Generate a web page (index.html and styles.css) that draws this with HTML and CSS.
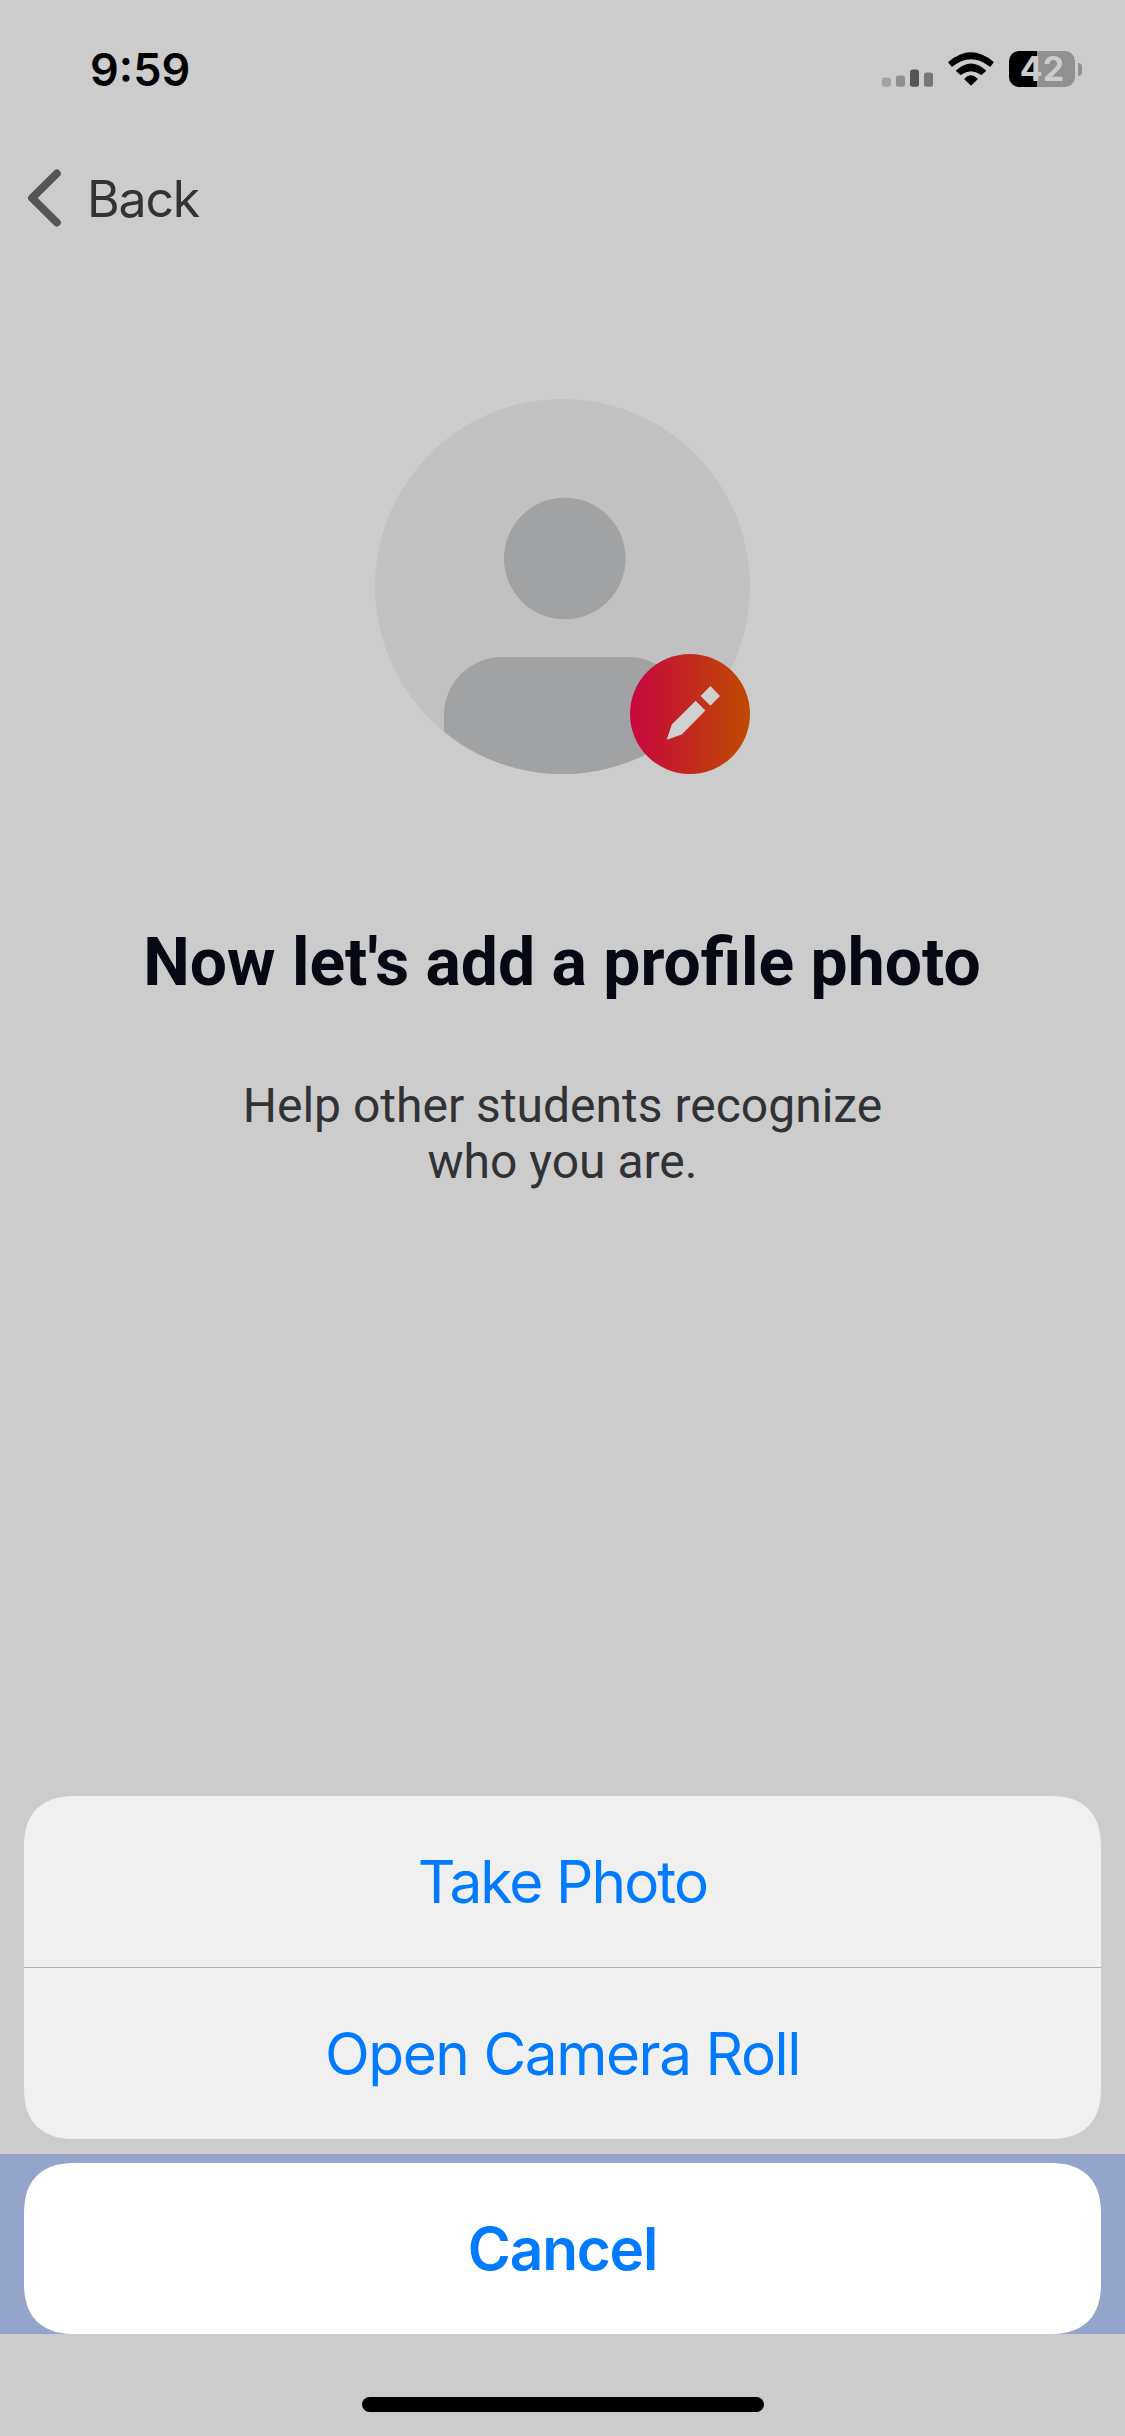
FILE: index.html
```html
<!DOCTYPE html>
<html lang="en">
<head>
<meta charset="utf-8">
<title>Add a profile photo</title>
<link rel="stylesheet" href="styles.css">
</head>
<body>
<div class="screen">
  <header class="status-bar">
    <span class="clock">9:59</span>
    <div class="status-icons">
      <svg class="signal" width="52" height="18" viewBox="0 0 52 18">
        <rect x="0" y="8.5" width="9" height="9.2" rx="2.5" fill="#a4a4a4"/>
        <rect x="14" y="6.5" width="9" height="11.2" rx="2.5" fill="#8f8f8f"/>
        <rect x="28" y="0.5" width="9" height="17.2" rx="2.5" fill="#555"/>
        <rect x="42" y="3.5" width="9" height="14.2" rx="2.5" fill="#777"/>
      </svg>
      <svg class="wifi" width="46" height="34" viewBox="264 65 138 102">
        <g fill="#000" stroke="#000" stroke-width="4" stroke-linejoin="round">
          <path d="M267 96Q333 40 399 96L390 107Q333 62 276 107Z"/>
          <path d="M290 121Q333 82 376 121L364 132Q333 109 302 132Z"/>
          <path d="M315 146Q333 127 351 146L333 163Z"/>
        </g>
      </svg>
      <div class="battery"><div class="battery-body">42</div><div class="battery-cap"></div></div>
    </div>
  </header>

  <nav class="nav-bar">
    <svg width="34" height="58" viewBox="0 0 34 58"><path d="M29.8 4.5L5.1 29L29.8 53.5" fill="none" stroke="#555" stroke-width="8" stroke-linecap="round" stroke-linejoin="round"/></svg>
    <span class="back-label">Back</span>
  </nav>

  <main class="content">
    <div class="avatar">
      <svg width="375" height="375" viewBox="0 0 375 375">
        <defs><clipPath id="disc"><circle cx="187.5" cy="187.5" r="187.5"/></clipPath></defs>
        <circle cx="187.5" cy="187.5" r="187.5" fill="#c1c1c1"/>
        <g clip-path="url(#disc)" fill="#a0a2a3">
          <circle cx="189.8" cy="159.5" r="60.8"/>
          <rect x="69" y="258" width="242" height="160" rx="58"/>
        </g>
      </svg>
      <svg class="edit-badge" width="120" height="120" viewBox="0 0 120 120">
        <defs><linearGradient id="warm"><stop offset="0" stop-color="#c8063f"/><stop offset="1" stop-color="#be4b00"/></linearGradient></defs>
        <circle cx="60" cy="60" r="60" fill="url(#warm)"/>
        <path fill="#d0d0d0" d="M36.8 85.8L41.8 70.6L65.7 46.8L75.4 56.6L51.8 80.6ZM70.6 42L80.4 32L90 42L80.4 51.8Z"/>
      </svg>
    </div>
    <h1 class="title">Now let's add a profile photo</h1>
    <p class="subtitle">Help other students recognize<br>who you are.</p>
  </main>

  <section class="action-sheet">
    <div class="options">
      <div class="option">Take Photo</div>
      <div class="option">Open Camera Roll</div>
    </div>
    <div class="cancel-strip"><div class="cancel">Cancel</div></div>
  </section>
  <footer class="home-area"><div class="home-indicator"></div></footer>
</div>
</body>
</html>
```
FILE: styles.css
```css
* { box-sizing: border-box; }
body { margin: 0; background: #ccc; }
.screen {
  width: 1125px;
  height: 2436px;
  display: flex;
  flex-direction: column;
  background: #ccc;
  font-family: Inter, "Liberation Sans", sans-serif;
  white-space: nowrap;
}
.status-bar {
  height: 138px;
  padding: 0 43px 0 90px;
  display: flex;
  justify-content: space-between;
  align-items: center;
}
.clock { padding-top: 1px; font-size: 45px; font-weight: 600; line-height: 54px; color: #000; }
.status-icons { display: flex; align-items: center; }
.signal { margin: 17px 14px 0 0; }
.wifi { margin-right: 15px; }
.battery { display: flex; align-items: center; gap: 3px; }
.battery-body {
  width: 66px;
  height: 36px;
  border-radius: 10px;
  background: linear-gradient(90deg, #000 28px, #909090 28px);
  color: #ccc;
  font-size: 34px;
  font-weight: 700;
  line-height: 36px;
  text-align: center;
}
.battery-cap { width: 4px; height: 13px; border-radius: 0 6px 6px 0; background: #909090; }

.nav-bar {
  height: 120px;
  padding: 0 27px;
  display: flex;
  align-items: center;
  gap: 26px;
}
.back-label { padding-top: 1px; font-size: 50px; line-height: 60px; letter-spacing: -1.2px; color: #333; }

.content { flex: 1; display: flex; flex-direction: column; align-items: center; padding-top: 141px; }
.avatar { position: relative; width: 375px; height: 375px; }
.avatar svg { display: block; }
.avatar .edit-badge { position: absolute; right: 0; bottom: 0; }
.title {
  margin: 149px 0 0;
  padding-right: 1px;
  font: 700 66px/80px Roboto, sans-serif;
  color: #060814;
}
.subtitle {
  margin: 75px 0 0;
  font: 400 48px/56px Roboto, sans-serif;
  color: #303236;
  text-align: center;
}

.options { margin: 0 24px 15px; border-radius: 42px; background: #f0f0f0; }
.option {
  height: 172px;
  display: flex;
  align-items: center;
  justify-content: center;
  font-size: 58.5px;
  letter-spacing: -1.9px;
  color: #007aff;
}
.option + .option { height: 171px; letter-spacing: -1.45px; }
.option:first-child { border-bottom: 1px solid #b0b0b2; }
.cancel-strip { padding: 9px 24px 0; background: #93a5ca; }
.cancel {
  height: 171px;
  border-radius: 42px;
  background: #fff;
  display: flex;
  align-items: center;
  justify-content: center;
  font-size: 58.5px;
  font-weight: 600;
  letter-spacing: -1.2px;
  color: #007aff;
}
@supports (corner-shape: superellipse(1.25)) {
  .options, .cancel { border-radius: 52px; corner-shape: superellipse(1.3); }
}
.home-area { height: 102px; padding-top: 63px; }
.home-indicator { width: 402px; height: 15px; margin: 0 auto; border-radius: 8px; background: #000; }
```
